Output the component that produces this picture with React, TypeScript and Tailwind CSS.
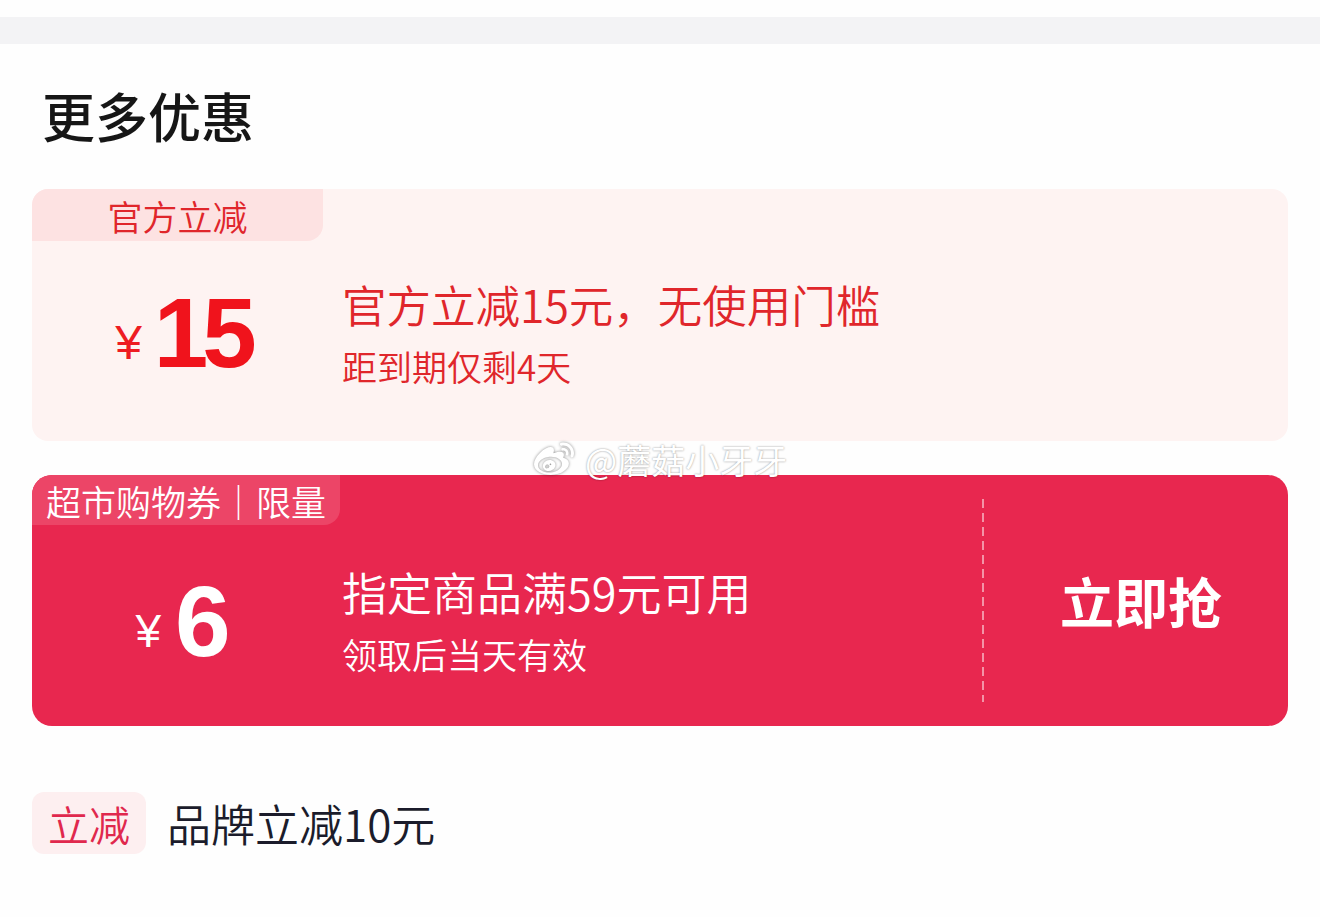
import { FaWeibo } from "react-icons/fa";

export default function App() {
  return (
    <div className="relative w-[1320px] h-[917px] overflow-hidden bg-[#fefefe] font-['Noto_Sans_CJK_SC',sans-serif]">
      <div className="h-[17px]" />
      <div className="h-[27px] bg-[#f3f3f5]" />
      <div className="px-[32px]">
        <h1 className="mt-[45px] pl-[10px] text-[53px] leading-[53px] font-medium text-[#161616]">
          更多优惠
        </h1>

        {/* Card 1 */}
        <div className="mt-[47px] h-[252px] rounded-[16px] bg-[#fef3f2] overflow-hidden flex flex-col">
          <div className="w-[291px] h-[52px] shrink-0 rounded-br-[16px] bg-[#fde2e2] flex items-center justify-center text-[35px] leading-none text-[#e0262b] font-[350]">
            官方立减
          </div>
          <div className="flex-1 flex items-center pb-[16px]">
            <div className="w-[302px] mr-[8px] flex items-end justify-center gap-[12px]">
              <span className="mb-[6px] text-[48px] leading-none text-[#ee1c22] font-['Liberation_Sans',sans-serif]">
                ¥
              </span>
              <span className="text-[98px] leading-[80px] font-bold tracking-[-6px] text-[#f0131c] font-['Liberation_Sans',sans-serif]">
                15
              </span>
            </div>
            <div className="flex flex-col text-[#e0262b] font-[350]">
              <div className="text-[44.5px] leading-[52px]">官方立减15元，无使用门槛</div>
              <div className="mt-[14px] text-[35px] leading-[44px]">距到期仅剩4天</div>
            </div>
          </div>
        </div>

        {/* Card 2 */}
        <div className="mt-[34px] h-[251px] rounded-[20px] bg-[#e8274f] overflow-hidden flex">
          <div className="flex-1 flex flex-col">
            <div className="w-[308px] h-[50px] shrink-0 rounded-br-[16px] bg-[#ec4567] flex items-center justify-center text-[35px] leading-none text-white font-[350]">
              超市购物券｜限量
            </div>
            <div className="flex-1 flex items-center pb-[10px]">
              <div className="w-[302px] mr-[8px] flex items-end justify-center gap-[14px]">
                <span className="mb-[6px] text-[46px] leading-none text-white font-['Liberation_Sans',sans-serif]">
                  ¥
                </span>
                <span className="text-[100px] leading-[78px] font-bold text-white font-['Liberation_Sans',sans-serif]">
                  6
                </span>
              </div>
              <div className="flex flex-col text-white font-[350]">
                <div className="text-[45px] leading-[52px]">指定商品满59元可用</div>
                <div className="mt-[14px] text-[35px] leading-[44px]">领取后当天有效</div>
              </div>
            </div>
          </div>
          <div className="w-[306px] flex items-stretch py-[24px]">
            <div className="w-[2px] bg-[repeating-linear-gradient(to_bottom,rgba(255,255,255,0.5)_0_9px,transparent_9px_14px)]" />
            <div className="flex-1 flex items-center justify-center pl-[10px]">
              <span className="text-[54px] leading-none font-semibold text-white">立即抢</span>
            </div>
          </div>
        </div>

        {/* Bottom row */}
        <div className="mt-[66px] flex items-center gap-[21px]">
          <div className="h-[62px] px-[16px] rounded-[12px] bg-[#fdeff0] flex items-center text-[41px] leading-none text-[#e0284d] font-[350]">
            立减
          </div>
          <div className="text-[44px] leading-none text-[#1b1c2b] font-[350]">品牌立减10元</div>
        </div>
      </div>

      {/* Watermark */}
      <div className="absolute left-[529px] top-[440px] flex items-center gap-[6px] text-white">
        <FaWeibo className="w-[50px] h-[40px] [filter:drop-shadow(0_0_1.5px_rgba(0,0,0,0.45))]" />
        <span className="text-[34px] leading-none [text-shadow:0_0_2px_rgba(0,0,0,0.45)]">@蘑菇小牙牙</span>
      </div>
    </div>
  );
}
